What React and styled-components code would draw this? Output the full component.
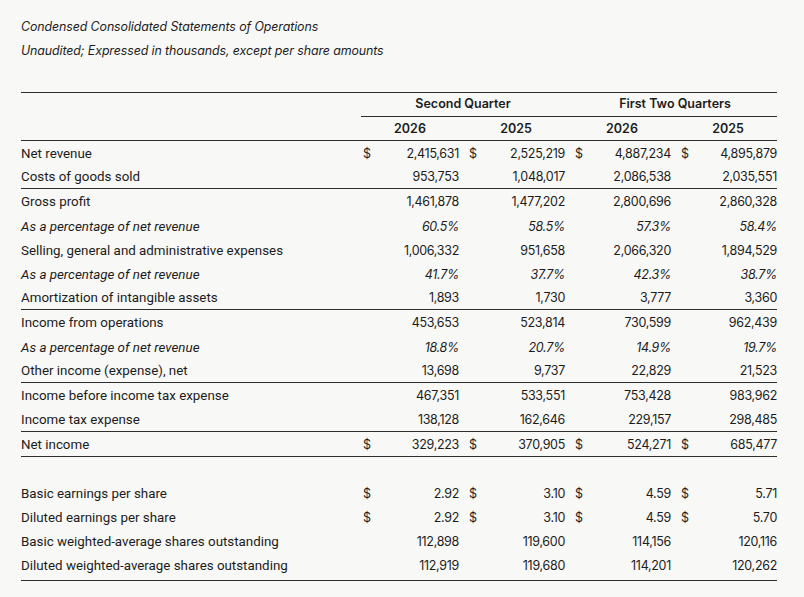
import styled, { createGlobalStyle } from "styled-components";

const GlobalStyle = createGlobalStyle`
  html, body {
    margin: 0;
    padding: 0;
    background: #f8f8f6;
  }
  body {
    font-family: Roboto, "Liberation Sans", sans-serif;
    color: #1c1c1c;
  }
`;

const Page = styled.div`
  padding: 14px 27px 0 21px;
  width: 804px;
  box-sizing: border-box;
`;

const Caption = styled.p`
  margin: 0;
  font-family: Inter, "Open Sans", sans-serif;
  font-style: italic;
  font-size: 12.4px;
  letter-spacing: -0.1px;
  line-height: 24px;
  padding-top: 1px;
  height: 23px;
`;

const Captions = styled.div`
  margin-bottom: 30px;
`;

const Table = styled.table`
  width: 756px;
  border-collapse: collapse;
  border-spacing: 0;
  table-layout: fixed;
  border-top: 1px solid #2e2e2e;
  border-bottom: 1px solid #2e2e2e;
`;

const Row = styled.tr`
  height: ${(p) => (p.$ruled ? "25px" : "24px")};
  border-top: ${(p) => (p.$ruled ? "1px solid #2e2e2e" : "none")};
  border-bottom: ${(p) => (p.$ruledBelow ? "1px solid #2e2e2e" : "none")};
`;

const Label = styled.td`
  padding: 1px 0 0 0;
  font-size: 13.35px;
  font-style: ${(p) => (p.$italic ? "italic" : "normal")};
  white-space: nowrap;
`;

const GroupHead = styled.th`
  padding: 0 ${(p) => (p.$gap ? "8px" : "0")} 2px 0;
  font-family: Inter, "Open Sans", sans-serif;
  font-weight: 600;
  font-size: 12.5px;
  text-align: center;
  border-bottom: 1px solid #2e2e2e;
`;

const YearHead = styled.th`
  padding: 0 ${(p) => (p.$gap ? "8px" : "0")} 0 0;
  font-family: Inter, "Open Sans", sans-serif;
  font-weight: 600;
  font-size: 12.5px;
  text-align: center;
`;

const Cell = styled.td`
  padding: 1px ${(p) => (p.$gap ? "8px" : "0")} 0 2px;
  font-family: Inter, "Open Sans", sans-serif;
  font-size: 12.5px;
  letter-spacing: -0.3px;
  font-style: ${(p) => (p.$italic ? "italic" : "normal")};
`;

const CellInner = styled.div`
  display: flex;
  justify-content: space-between;
`;

const Spacer = styled.tr`
  height: ${(p) => p.$h}px;
`;

const rows = [
  { label: "Net revenue", v: ["2,415,631", "2,525,219", "4,887,234", "4,895,879"], dollar: true },
  { label: "Costs of goods sold", v: ["953,753", "1,048,017", "2,086,538", "2,035,551"] },
  { label: "Gross profit", v: ["1,461,878", "1,477,202", "2,800,696", "2,860,328"], ruled: true },
  { label: "As a percentage of net revenue", v: ["60.5%", "58.5%", "57.3%", "58.4%"], italic: true },
  { label: "Selling, general and administrative expenses", v: ["1,006,332", "951,658", "2,066,320", "1,894,529"] },
  { label: "As a percentage of net revenue", v: ["41.7%", "37.7%", "42.3%", "38.7%"], italic: true },
  { label: "Amortization of intangible assets", v: ["1,893", "1,730", "3,777", "3,360"] },
  { label: "Income from operations", v: ["453,653", "523,814", "730,599", "962,439"], ruled: true },
  { label: "As a percentage of net revenue", v: ["18.8%", "20.7%", "14.9%", "19.7%"], italic: true },
  { label: "Other income (expense), net", v: ["13,698", "9,737", "22,829", "21,523"] },
  { label: "Income before income tax expense", v: ["467,351", "533,551", "753,428", "983,962"], ruled: true },
  { label: "Income tax expense", v: ["138,128", "162,646", "229,157", "298,485"] },
  { label: "Net income", v: ["329,223", "370,905", "524,271", "685,477"], dollar: true, ruled: true, below: true },
];

const perShare = [
  { label: "Basic earnings per share", v: ["2.92", "3.10", "4.59", "5.71"], dollar: true },
  { label: "Diluted earnings per share", v: ["2.92", "3.10", "4.59", "5.70"], dollar: true },
  { label: "Basic weighted-average shares outstanding", v: ["112,898", "119,600", "114,156", "120,116"] },
  { label: "Diluted weighted-average shares outstanding", v: ["112,919", "119,680", "114,201", "120,262"] },
];

function DataRow({ row }) {
  return (
    <Row $ruled={row.ruled} $ruledBelow={row.below}>
      <Label $italic={row.italic}>{row.label}</Label>
      {row.v.map((val, i) => (
        <Cell key={i} $gap={i < 3} $italic={row.italic}>
          <CellInner>
            <span>{row.dollar ? "$" : ""}</span>
            <span>{val}</span>
          </CellInner>
        </Cell>
      ))}
    </Row>
  );
}

export default function App() {
  return (
    <Page>
      <GlobalStyle />
      <Captions>
        <Caption>Condensed Consolidated Statements of Operations</Caption>
        <Caption>Unaudited; Expressed in thousands, except per share amounts</Caption>
      </Captions>
      <Table>
        <colgroup>
          <col style={{ width: 340 }} />
          <col style={{ width: 106 }} />
          <col style={{ width: 106 }} />
          <col style={{ width: 106 }} />
          <col style={{ width: 98 }} />
        </colgroup>
        <thead>
          <Row>
            <th />
            <GroupHead colSpan={2} $gap>
              Second Quarter
            </GroupHead>
            <GroupHead colSpan={2}>First Two Quarters</GroupHead>
          </Row>
          <Row $ruledBelow>
            <th />
            <YearHead $gap>2026</YearHead>
            <YearHead $gap>2025</YearHead>
            <YearHead $gap>2026</YearHead>
            <YearHead>2025</YearHead>
          </Row>
        </thead>
        <tbody>
          {rows.map((r, i) => (
            <DataRow key={i} row={r} />
          ))}
          <Spacer $h={24}>
            <td colSpan={5} />
          </Spacer>
          {perShare.map((r, i) => (
            <DataRow key={i} row={r} />
          ))}
          <Spacer $h={4}>
            <td colSpan={5} />
          </Spacer>
        </tbody>
      </Table>
    </Page>
  );
}
